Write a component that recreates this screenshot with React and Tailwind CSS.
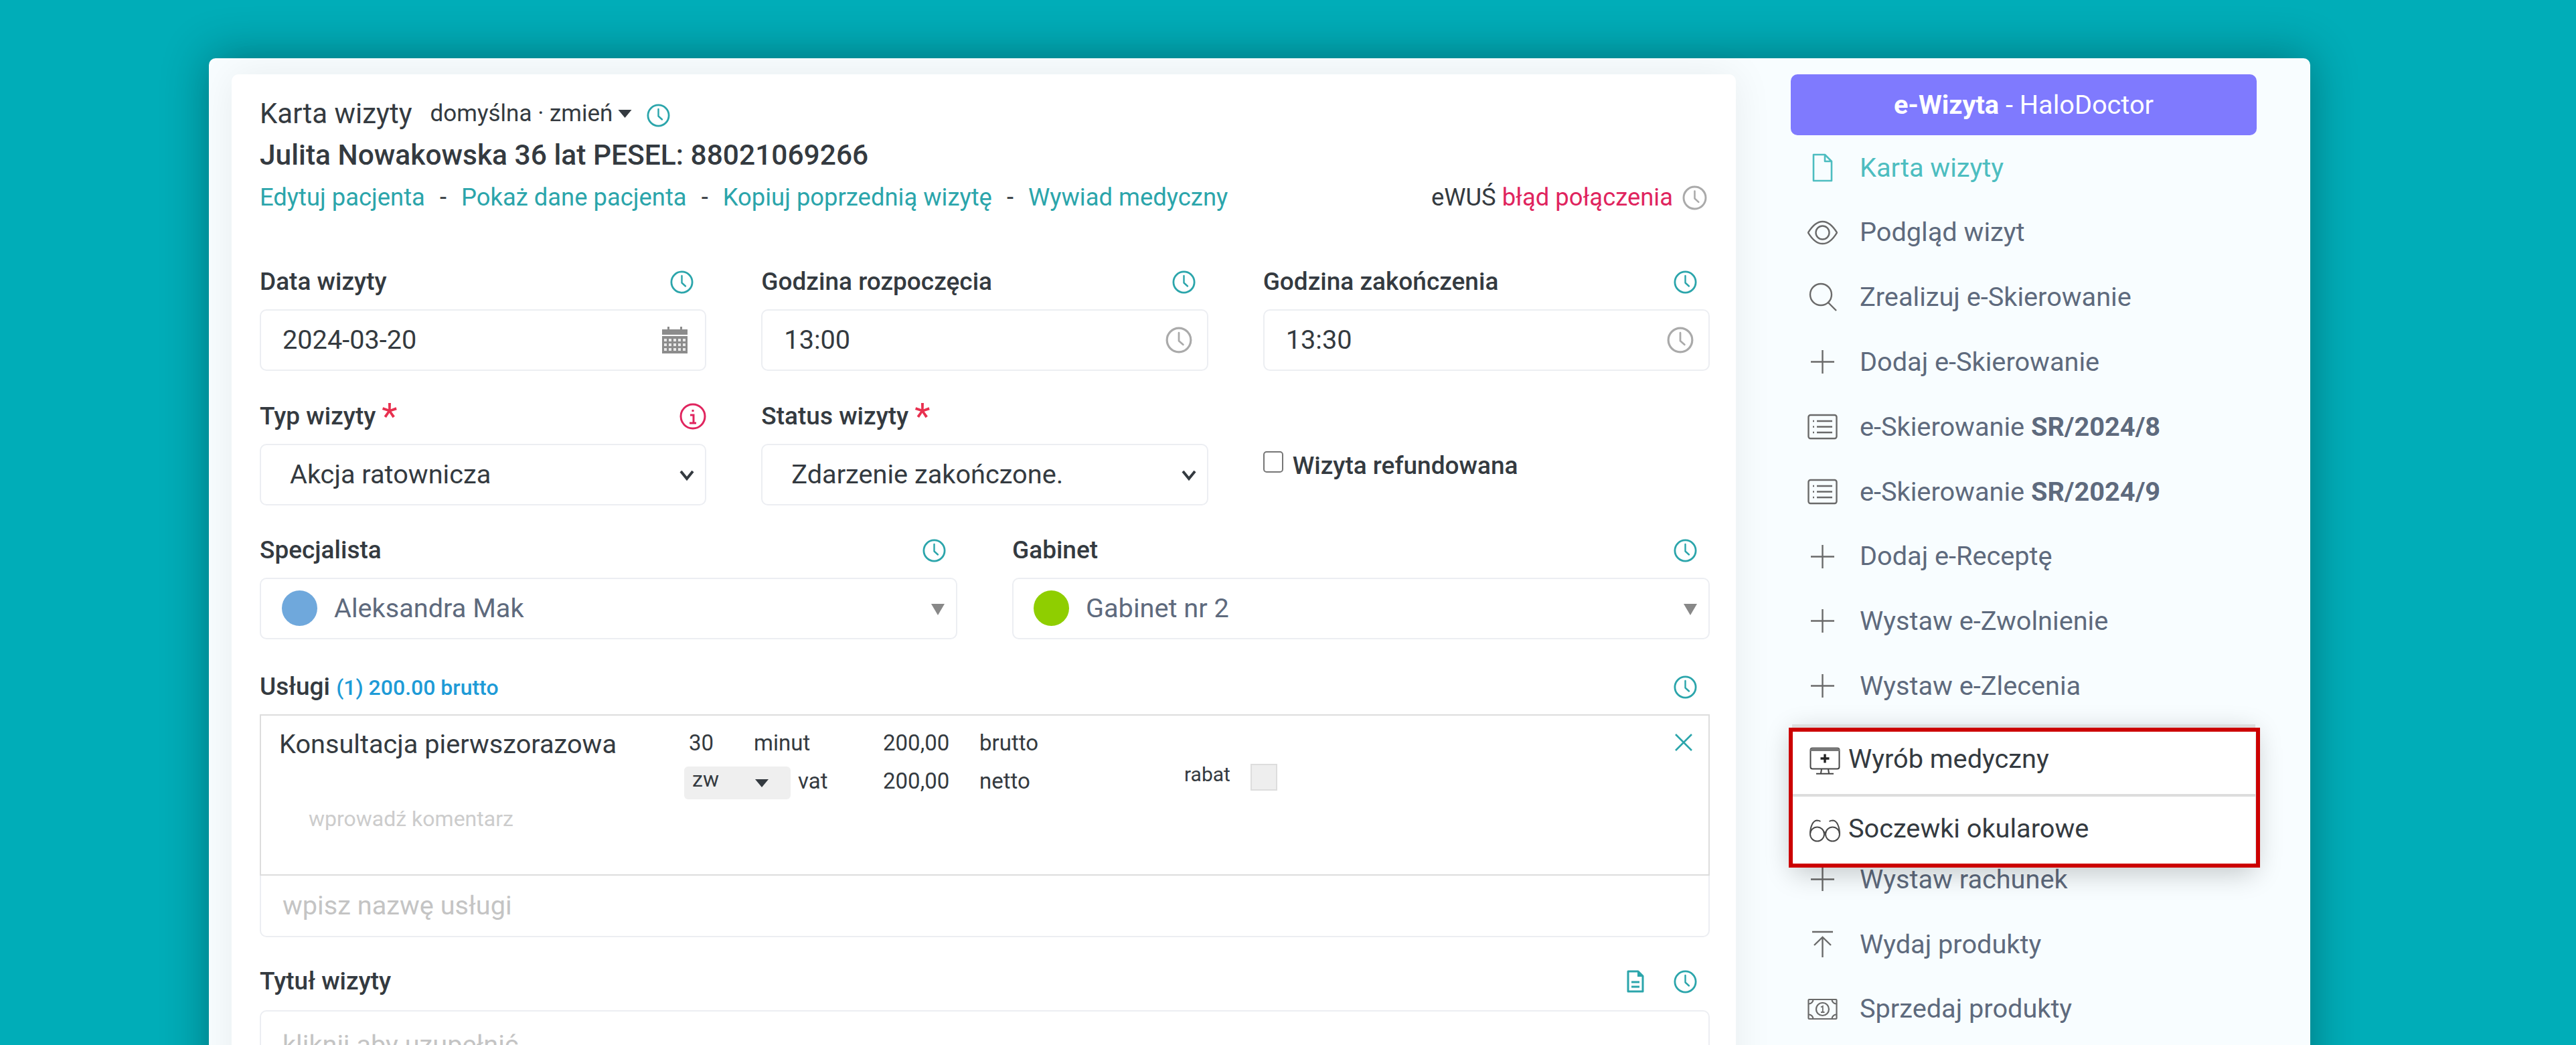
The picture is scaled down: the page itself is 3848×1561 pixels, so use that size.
import React from "react";

const Clock = ({ className = "w-[35px] h-[35px] text-[#2ba5ab]" }) => (
  <svg viewBox="0 0 35 35" fill="none" stroke="currentColor" strokeWidth="2.8" className={className}>
    <circle cx="17.5" cy="17.5" r="15.6" />
    <path d="M17.5 8v10.5l5.500 5" strokeWidth="2.4" strokeLinecap="round" strokeLinejoin="round" />
  </svg>
);

const Field = ({ label, star, right, children, className = "" }) => (
  <div className={className}>
    <div className="flex h-[44px] items-center justify-between">
      <div className="text-[37px] font-medium leading-[44px] text-[#343a40]">
        {label}
        {star && (
          <span className="ml-[9px] inline-block translate-y-[6px] text-[54px] font-normal leading-[30px] text-[#e8304f]">*</span>
        )}
      </div>
      {right}
    </div>
    <div className="mt-[19px]">{children}</div>
  </div>
);

const Box = ({ children, className = "" }) => (
  <div className={`flex h-[92px] items-center justify-between rounded-[10px] border-2 border-[#eceef2] bg-white ${className}`}>
    {children}
  </div>
);

const Chevron = () => (
  <svg viewBox="0 0 24 24" fill="none" stroke="#343a40" strokeWidth="4" className="h-[24px] w-[24px]">
    <path d="M3 7l9 11 9-11" />
  </svg>
);

const Tri = () => (
  <svg viewBox="0 0 20 20" className="h-[20px] w-[20px]">
    <path d="M0 3h20L10 20z" fill="#888888" />
  </svg>
);

const Dot = ({ color }) => <span className={`h-[53px] w-[53px] rounded-full ${color}`} />;

const PlusIcon = () => (
  <svg viewBox="0 0 45 45" fill="none" stroke="currentColor" strokeWidth="2.4" className="h-[45px] w-[45px]">
    <path d="M22.5 5v35M5 22.5h35" />
  </svg>
);
const FileIcon = () => (
  <svg viewBox="0 0 45 45" fill="none" stroke="#4dbdc0" strokeWidth="2.6" className="h-[45px] w-[45px]">
    <path d="M9 3h17l10 10v29H9zM26 3v10h10" strokeLinejoin="round" />
  </svg>
);
const EyeIcon = () => (
  <svg viewBox="0 0 45 45" fill="none" stroke="currentColor" strokeWidth="2.4" className="h-[45px] w-[45px]">
    <path d="M1 22.5C8 11 15 6 22.5 6S37 11 44 22.5C37 34 30 39 22.5 39S8 34 1 22.5z" />
    <circle cx="22.5" cy="22.5" r="10" />
  </svg>
);
const SearchIcon = () => (
  <svg viewBox="0 0 45 45" fill="none" stroke="currentColor" strokeWidth="2.4" className="h-[45px] w-[45px]">
    <circle cx="20" cy="19" r="16" />
    <path d="M31 31l12 12" />
  </svg>
);
const ListIcon = () => (
  <svg viewBox="0 0 45 45" fill="none" stroke="currentColor" strokeWidth="2.4" className="h-[45px] w-[45px]">
    <rect x="1.5" y="5" width="42" height="35" rx="3" />
    <path d="M14 14h23M14 22.5h23M14 31h23M8 14h2M8 22.5h2M8 31h2" />
  </svg>
);
const UploadIcon = () => (
  <svg viewBox="0 0 45 45" fill="none" stroke="currentColor" strokeWidth="2.4" className="h-[45px] w-[45px]">
    <path d="M7 4h31M22.5 42V12M10 24l12.5-12L35 24" />
  </svg>
);
const MoneyIcon = () => (
  <svg viewBox="0 0 45 45" fill="none" stroke="currentColor" strokeWidth="2.2" className="h-[45px] w-[45px]">
    <rect x="1.5" y="8" width="42" height="29" rx="1" />
    <circle cx="22.5" cy="22.5" r="9.500" />
    <path d="M2 14.500a6.500 6.500 0 006.500-6.500M36.500 8a6.500 6.500 0 006.500 6.500M2 30.500a6.500 6.500 0 016.500 6.500M43 30.500a6.500 6.500 0 00-6.500 6.500" />
    <path d="M20 19.500l2.800-1.500v9M20 27h5.500" strokeWidth="1.800" />
  </svg>
);
const MonitorIcon = () => (
  <svg viewBox="0 0 46 41" fill="none" stroke="#444444" strokeWidth="2" className="h-[41px] w-[46px]">
    <rect x="1.5" y="1.500" width="43" height="31" rx="3" />
    <path d="M1 5a4 4 0 014-4h36a4 4 0 014 4v1H1z" fill="#777777" stroke="none" />
    <path d="M23 10.500v13M16.500 17h13" stroke="#222222" strokeWidth="3.4" />
    <path d="M18 33l-1 6M28 33l1 6M10 39.800h26" />
  </svg>
);
const GlassesIcon = () => (
  <svg viewBox="0 0 46 34" fill="none" stroke="#4a4a4a" strokeWidth="2" className="h-[34px] w-[46px]">
    <circle cx="11.500" cy="22" r="10.500" />
    <circle cx="34.500" cy="22" r="10.500" />
    <path d="M21.500 20c1-1.500 2-1.500 3 0M1 22C1 11 5 2 11 1.500c2 0 4 .5 5.500 1.500M45 22C45 11 41 2 35 1.500c-2 0-4 .5-5.500 1.500" />
  </svg>
);

const Row = ({ icon, children, active }) => (
  <div className={`flex h-[96.8px] items-center gap-[33px] pl-[25px] text-[39.7px] ${active ? "text-[#4dbdc0]" : "text-[#5e6a7d]"}`}>
    <span className="flex w-[45px] justify-center text-[#6a6a6a]">{icon}</span>
    <span>{children}</span>
  </div>
);

export default function App() {
  return (
    <div
      className="h-[1561px] w-[3848px] overflow-hidden bg-[#00adb8] pl-[312px] pt-[87px] text-[#343a40]"
      style={{ fontFamily: "Roboto, 'Noto Sans', sans-serif" }}
    >
      <div className="flex h-[1600px] w-[3139px] rounded-[10px] bg-[#f8fdff] shadow-[0_-4px_70px_rgba(0,0,0,0.32)]">
        {/* left column */}
        <div className="w-[2283px] shrink-0 pl-[34px] pt-[24px]">
          <div className="h-[1600px] w-[2247px] rounded-[10px] bg-white pl-[42px] pr-[39px] pt-[35px] shadow-[0_0_60px_rgba(0,0,0,0.07)]">
            <div className="flex h-[48px] items-center">
              <span className="text-[42px] leading-[48px]">Karta wizyty</span>
              <span className="ml-[27px] text-[35px]">domyślna · zmień</span>
              <svg viewBox="0 0 20 12" className="ml-[8px] h-[12px] w-[21px]">
                <path d="M0 0h20L10 12z" fill="#343a40" />
              </svg>
              <Clock className="ml-[22px] mt-[4px] h-[35px] w-[35px] text-[#2ba5ab]" />
            </div>
            <div className="mt-[13px] text-[42.5px] font-medium leading-[50px]">Julita Nowakowska 36 lat PESEL: 88021069266</div>
            <div className="mt-[16px] flex h-[44px] items-center justify-between text-[36.4px]">
              <div className="text-[#2ba5ab]">
                Edytuj pacjenta <span className="mx-[13px] text-[#343a40]">-</span> Pokaż dane pacjenta{" "}
                <span className="mx-[13px] text-[#343a40]">-</span> Kopiuj poprzednią wizytę{" "}
                <span className="mx-[13px] text-[#343a40]">-</span> Wywiad medyczny
              </div>
              <div className="flex items-center pr-[4px]">
                <span>eWUŚ</span>
                <span className="ml-[9px] text-[#e0245e]">błąd połączenia</span>
                <Clock className="ml-[14px] h-[37px] w-[37px] text-[#aaaaaa]" />
              </div>
            </div>

            <div className="mt-[82px] grid grid-cols-3 gap-x-[82px] gap-y-[46px]">
              <Field label="Data wizyty" right={<Clock className="mr-[19px] h-[35px] w-[35px] text-[#2ba5ab]" />}>
                <Box className="pl-[32px] pr-[26px] text-[39.7px]">
                  <span>2024-03-20</span>
                  <svg viewBox="0 0 38 40" className="h-[40px] w-[38px]" fill="#8c8c8c">
                    <rect x="0" y="4" width="38" height="8" />
                    <rect x="8" y="0" width="3" height="5" />
                    <rect x="27" y="0" width="3" height="5" />
                    <rect x="0" y="14" width="38" height="26" />
                    <g fill="#e8e8e8">
                      <rect x="3" y="18" width="4" height="4" /><rect x="10" y="18" width="4" height="4" /><rect x="17" y="18" width="4" height="4" /><rect x="24" y="18" width="4" height="4" /><rect x="31" y="18" width="4" height="4" />
                      <rect x="3" y="25" width="4" height="4" /><rect x="10" y="25" width="4" height="4" /><rect x="17" y="25" width="4" height="4" /><rect x="24" y="25" width="4" height="4" /><rect x="31" y="25" width="4" height="4" />
                      <rect x="3" y="32" width="4" height="4" /><rect x="10" y="32" width="4" height="4" /><rect x="17" y="32" width="4" height="4" /><rect x="24" y="32" width="4" height="4" /><rect x="31" y="32" width="4" height="4" />
                    </g>
                  </svg>
                </Box>
              </Field>
              <Field label="Godzina rozpoczęcia" right={<Clock className="mr-[19px] h-[35px] w-[35px] text-[#2ba5ab]" />}>
                <Box className="pl-[32px] pr-[22px] text-[39.7px]">
                  <span>13:00</span>
                  <Clock className="h-[40px] w-[40px] text-[#aaaaaa]" />
                </Box>
              </Field>
              <Field label="Godzina zakończenia" right={<Clock className="mr-[19px] h-[35px] w-[35px] text-[#2ba5ab]" />}>
                <Box className="pl-[32px] pr-[22px] text-[39.7px]">
                  <span>13:30</span>
                  <Clock className="h-[40px] w-[40px] text-[#aaaaaa]" />
                </Box>
              </Field>

              <Field
                label="Typ wizyty"
                star
                right={
                  <svg viewBox="0 0 40 40" fill="none" stroke="#e0245e" strokeWidth="3" className="h-[40px] w-[40px]">
                    <circle cx="20" cy="20" r="18" />
                    <path d="M20 10v3M16 18h5v12M15 30h10" />
                  </svg>
                }
              >
                <Box className="pl-[43px] pr-[15px] text-[39.7px]">
                  <span>Akcja ratownicza</span>
                  <Chevron />
                </Box>
              </Field>
              <Field label="Status wizyty" star>
                <Box className="pl-[43px] pr-[15px] text-[39.7px]">
                  <span>Zdarzenie zakończone.</span>
                  <Chevron />
                </Box>
              </Field>
              <label className="mt-[74px] flex h-[33px] items-start self-start text-[37px] font-medium leading-[44px]">
                <span className="mr-[14px] h-[32px] w-[30px] rounded-[5px] border-2 border-[#767676] bg-white" />
                <span>Wizyta refundowana</span>
              </label>
            </div>

            <div className="mt-[45px] grid grid-cols-2 gap-x-[82px]">
              <Field label="Specjalista" right={<Clock className="mr-[17px] h-[35px] w-[35px] text-[#2ba5ab]" />}>
                <Box className="pl-[31px] pr-[17px]">
                  <span className="flex items-center gap-[25px] text-[39.7px] text-[#5e6a7d]">
                    <Dot color="bg-[#6fa8dc]" />
                    Aleksandra Mak
                  </span>
                  <Tri />
                </Box>
              </Field>
              <Field label="Gabinet" right={<Clock className="mr-[19px] h-[35px] w-[35px] text-[#2ba5ab]" />}>
                <Box className="pl-[30px] pr-[17px]">
                  <span className="flex items-center gap-[25px] text-[39.7px] text-[#5e6a7d]">
                    <Dot color="bg-[#8fce00]" />
                    Gabinet nr 2
                  </span>
                  <Tri />
                </Box>
              </Field>
            </div>

            <div className="mt-[49px] flex h-[44px] items-center justify-between">
              <div className="text-[37px] font-medium leading-[44px]">
                Usługi <span className="text-[32px] text-[#1e9bd7]">(1) 200.00 brutto</span>
              </div>
              <Clock className="mr-[19px] h-[35px] w-[35px] text-[#2ba5ab]" />
            </div>

            <div className="mt-[19px] flex h-[241px] border-2 border-[#dddddd] pl-[27px] pr-[24px] pt-[19px]">
              <div className="w-[612px] shrink-0">
                <div className="text-[39.7px] leading-[48px]">Konsultacja pierwszorazowa</div>
                <div className="ml-[44px] mt-[67px] text-[32px] leading-[40px] text-[#cccccc]">wprowadź komentarz</div>
              </div>
              <div className="flex-1 text-[33px] leading-[44px]">
                <div className="flex h-[44px] items-center">
                  <span className="w-[97px]">30</span>
                  <span className="w-[193px]">minut</span>
                  <span className="w-[144px]">200,00</span>
                  <span>brutto</span>
                </div>
                <div className="-ml-[7px] mt-[13px] flex h-[49px] items-start">
                  <span className="flex h-[49px] w-[159px] items-center rounded-[6px] bg-[#efefef] pl-[12px] pr-[32px] text-[32px]">
                    <span className="-mt-[12px] flex-1">zw</span>
                    <svg viewBox="0 0 20 12" className="h-[12px] w-[22px]">
                      <path d="M0 0h20L10 12z" fill="#343a40" />
                    </svg>
                  </span>
                  <span className="ml-[11px] w-[127px]">vat</span>
                  <span className="w-[144px]">200,00</span>
                  <span className="w-[306px]">netto</span>
                  <span className="-mt-[10px] text-[30px]">rabat</span>
                  <span className="-mt-[4px] ml-[30px] h-[40px] w-[40px] border-2 border-[#dddddd] bg-[#eeeeee]" />
                </div>
              </div>
              <svg viewBox="0 0 26 26" fill="none" stroke="#2ba5ab" strokeWidth="2.600" className="mt-[8px] h-[26px] w-[26px]">
                <path d="M1 1l24 24M25 1L1 25" />
              </svg>
            </div>
            <Box className="h-[91px] rounded-t-none !border-t-0 pl-[32px] text-[39.7px] text-[#c4c4c4]">
              <span>wpisz nazwę usługi</span>
            </Box>

            <div className="mt-[44px] flex h-[44px] items-center justify-between">
              <div className="text-[37px] font-medium leading-[44px]">Tytuł wizyty</div>
              <div className="mr-[19px] flex items-center gap-[44px]">
                <svg viewBox="0 0 26 34" fill="none" stroke="#2ba5ab" strokeWidth="3" className="h-[34px] w-[26px]">
                  <path d="M2 2h15l7 7v23H2z" strokeLinejoin="round" />
                  <path d="M16 2l8 8h-8z" fill="#2ba5ab" stroke="none" />
                  <path d="M7 18h12M7 25h12" />
                </svg>
                <Clock className="h-[35px] w-[35px] text-[#2ba5ab]" />
              </div>
            </div>
            <div className="mt-[21px]">
              <Box className="items-start pl-[32px] pt-[20px] text-[39.7px] text-[#c4c4c4]">
                <span>kliknij aby uzupełnić</span>
              </Box>
            </div>
          </div>
        </div>

        {/* sidebar */}
        <div className="flex-1 pl-[80px] pr-[80px] pt-[24px]">
          <div className="flex h-[91px] items-center justify-center rounded-[10px] bg-[#7f7afe] text-[39.7px] text-white">
            <span>
              <span className="font-bold">e-Wizyta</span> - HaloDoctor
            </span>
          </div>
          <div>
            <Row active icon={<FileIcon />}>Karta wizyty</Row>
            <Row icon={<EyeIcon />}>Podgląd wizyt</Row>
            <Row icon={<SearchIcon />}>Zrealizuj e-Skierowanie</Row>
            <Row icon={<PlusIcon />}>Dodaj e-Skierowanie</Row>
            <Row icon={<ListIcon />}>
              e-Skierowanie <b className="font-bold">SR/2024/8</b>
            </Row>
            <Row icon={<ListIcon />}>
              e-Skierowanie <b className="font-bold">SR/2024/9</b>
            </Row>
            <Row icon={<PlusIcon />}>Dodaj e-Receptę</Row>
            <Row icon={<PlusIcon />}>Wystaw e-Zwolnienie</Row>
            <Row icon={<PlusIcon />}>Wystaw e-Zlecenia</Row>
            <div className="relative z-10 -mb-[27px] ml-[2px] mr-[2px] mt-[9px] h-[210px] rounded-[8px] bg-white text-[39.7px] text-[#343a40] shadow-[0_12px_40px_rgba(0,0,0,0.22)]">
              <div className="flex h-[104px] items-center gap-[12px] border-t-[5px] border-[#dddddd] pl-[26px]">
                <MonitorIcon />
                <span className="-mt-[6px]">Wyrób medyczny</span>
              </div>
              <div className="flex h-[106px] items-center gap-[12px] border-t-[4px] border-[#dddddd] pl-[26px]">
                <GlassesIcon />
                <span className="-mt-[6px]">Soczewki okularowe</span>
              </div>
              <div className="absolute -bottom-[4px] -left-[5px] -right-[7px] top-[5px] border-[6px] border-[#cc0000]" />
            </div>
            <Row icon={<PlusIcon />}>Wystaw rachunek</Row>
            <Row icon={<UploadIcon />}>Wydaj produkty</Row>
            <Row icon={<MoneyIcon />}>Sprzedaj produkty</Row>
          </div>
        </div>
      </div>
    </div>
  );
}
